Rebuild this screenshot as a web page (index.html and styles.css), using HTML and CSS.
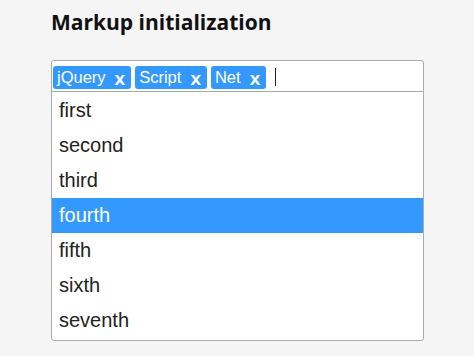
FILE: index.html
```html
<!DOCTYPE html>
<html>
<head>
<meta charset="utf-8">
<link rel="stylesheet" href="styles.css">
</head>
<body>
<div class="page">
  <h1 class="title">Markup initialization</h1>
  <div class="select">
    <div class="tags">
      <span class="tag">jQuery<span class="remove">x</span></span>
      <span class="tag">Script<span class="remove">x</span></span>
      <span class="tag">Net<span class="remove">x</span></span>
      <span class="cursor"></span>
    </div>
    <ul class="options">
      <li class="option">first</li>
      <li class="option">second</li>
      <li class="option">third</li>
      <li class="option active">fourth</li>
      <li class="option">fifth</li>
      <li class="option">sixth</li>
      <li class="option">seventh</li>
    </ul>
  </div>
</div>
</body>
</html>
```
FILE: styles.css
```css
html, body {
  margin: 0;
  padding: 0;
  background: #f5f5f6;
  font-family: "Liberation Sans", Arial, sans-serif;
}
.page {
  padding: 8px 0 0 51px;
  width: 373px;
}
.title {
  margin: 0;
  font-family: "Open Sans", "Liberation Sans", sans-serif;
  font-weight: 700;
  font-size: 21px;
  line-height: 29px;
  color: #111;
}
.select {
  margin-top: 23px;
  background: #fff;
  border: 1px solid #a9abae;
  border-radius: 3px;
}
.tags {
  display: flex;
  align-items: center;
  gap: 4px;
  padding: 4px 2px 2px 1px;
  height: 24px;
  border-bottom: 1px solid #a9abae;
}
.tag {
  display: flex;
  align-items: center;
  height: 23px;
  padding: 0 6px 0 4px;
  background: #3399ff;
  color: #fff;
  border-radius: 3px;
  font-size: 16.5px;
}
.remove {
  margin-left: 9px;
  font-weight: 700;
  font-size: 19px;
  line-height: 1;
  margin-top: 2px;
}
.cursor {
  margin-left: 5px;
  height: 18px;
  border-left: 1.5px solid #222;
}
.options {
  list-style: none;
  margin: 0;
  padding: 1px 0 2px;
}
.option {
  height: 35px;
  line-height: 35px;
  padding-left: 7px;
  font-size: 20px;
  color: #222;
}
.option.active {
  background: #3399ff;
  color: #fff;
}
```
